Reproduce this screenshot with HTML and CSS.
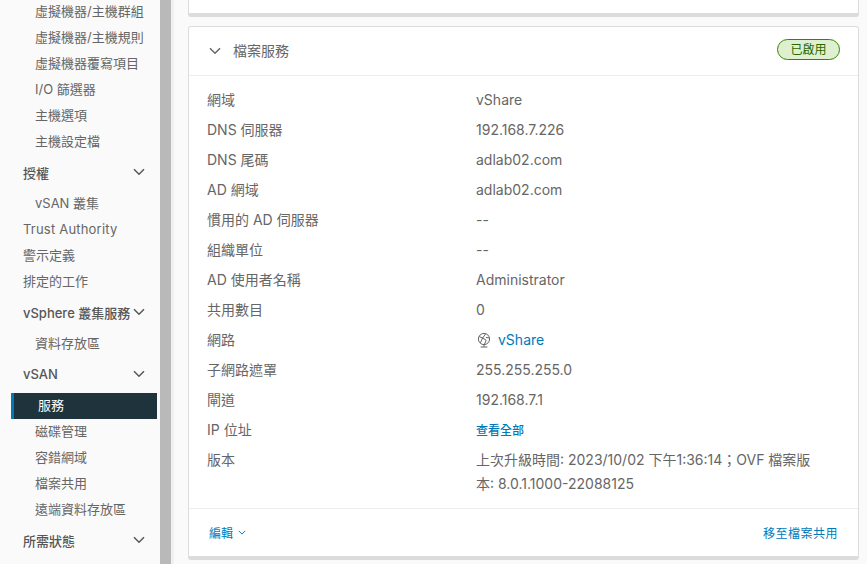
FILE: index.html
```html
<!DOCTYPE html>
<html lang="zh-Hant">
<head>
<meta charset="utf-8">
<title>檔案服務</title>
<link rel="stylesheet" href="styles.css">
</head>
<body>
<div class="app">
  <nav class="sidebar">
    <div class="nav-list">
      <a class="item sub">虛擬機器/主機群組</a>
      <a class="item sub">虛擬機器/主機規則</a>
      <a class="item sub">虛擬機器覆寫項目</a>
      <a class="item sub">I/O 篩選器</a>
      <a class="item sub">主機選項</a>
      <a class="item sub">主機設定檔</a>
      <div class="head"><span>授權</span><svg class="chev" viewBox="0 0 12 8"><path d="M1 1.2 6 6.2 11 1.2"/></svg></div>
      <a class="item sub">vSAN 叢集</a>
      <a class="item top spaced-latin">Trust Authority</a>
      <a class="item top">警示定義</a>
      <a class="item top">排定的工作</a>
      <div class="head"><span>vSphere 叢集服務</span><svg class="chev" viewBox="0 0 12 8"><path d="M1 1.2 6 6.2 11 1.2"/></svg></div>
      <a class="item sub">資料存放區</a>
      <div class="head"><span>vSAN</span><svg class="chev" viewBox="0 0 12 8"><path d="M1 1.2 6 6.2 11 1.2"/></svg></div>
      <a class="item selected">服務</a>
      <a class="item sub">磁碟管理</a>
      <a class="item sub">容錯網域</a>
      <a class="item sub">檔案共用</a>
      <a class="item sub">遠端資料存放區</a>
      <div class="head"><span>所需狀態</span><svg class="chev" viewBox="0 0 12 8"><path d="M1 1.2 6 6.2 11 1.2"/></svg></div>
    </div>
  </nav>
  <div class="splitter"></div>
  <main class="main">
    <section class="card card-prev"></section>
    <section class="card">
      <header class="card-head">
        <svg class="head-chev" viewBox="0 0 12 8"><path d="M1 1.2 6 6.2 11 1.2"/></svg>
        <h2 class="title">檔案服務</h2>
        <span class="badge">已啟用</span>
      </header>
      <dl class="rows">
        <div class="row"><dt>網域</dt><dd>vShare</dd></div>
        <div class="row"><dt>DNS 伺服器</dt><dd>192.168.7.226</dd></div>
        <div class="row"><dt>DNS 尾碼</dt><dd>adlab02.com</dd></div>
        <div class="row"><dt>AD 網域</dt><dd>adlab02.com</dd></div>
        <div class="row"><dt>慣用的 AD 伺服器</dt><dd>--</dd></div>
        <div class="row"><dt>組織單位</dt><dd>--</dd></div>
        <div class="row"><dt>AD 使用者名稱</dt><dd>Administrator</dd></div>
        <div class="row"><dt>共用數目</dt><dd>0</dd></div>
        <div class="row"><dt>網路</dt><dd class="net">
          <svg class="globe" viewBox="0 0 16 16"><circle cx="8" cy="7" r="5.6"/><path d="M3.2 4.6 6.6 6 10.2 8.2M6.6 6 9.6 2M10.2 8.2 8.4 12.5M6.6 6 4.4 10.8M10 5.4 13.2 6M8 12.6V15M4.6 15H11.4"/></svg>
          <a class="link">vShare</a></dd></div>
        <div class="row"><dt>子網路遮罩</dt><dd>255.255.255.0</dd></div>
        <div class="row"><dt>閘道</dt><dd>192.168.7.1</dd></div>
        <div class="row"><dt>IP 位址</dt><dd><a class="link small">查看全部</a></dd></div>
        <div class="row row-tall"><dt>版本</dt><dd>上次升級時間: 2023/10/02 下午1:36:14；OVF 檔案版本: 8.0.1.1000-22088125</dd></div>
      </dl>
      <footer class="card-foot">
        <a class="action">編輯<svg class="mini-chev" viewBox="0 0 10 6"><path d="M1 1 5 5 9 1"/></svg></a>
        <a class="action spaced">移至檔案共用</a>
      </footer>
    </section>
  </main>
</div>
</body>
</html>
```
FILE: styles.css
```css
* { box-sizing: border-box; }
html, body { margin: 0; height: 564px; overflow: hidden; }
body {
  font-family: Inter, "Noto Sans CJK TC", sans-serif;
  font-size: 13px;
  color: #666;
  background: #fafafa;
}
.app { display: flex; height: 564px; overflow: hidden; }

.sidebar { width: 157px; flex: none; background: #fafafa; overflow: hidden; }
.nav-list { margin-top: -1px; display: flex; flex-direction: column; }
.item { display: block; height: 26px; line-height: 25px; white-space: nowrap; color: #666; }
.sub { padding-left: 35px; }
.top { padding-left: 23px; }
.spaced-latin { letter-spacing: .2px; }
.selected {
  margin-left: 11px;
  padding-left: 24px;
  background: #1f333d;
  border-left: 3px solid #0079b8;
  color: #fff;
}
.head {
  height: 36px;
  padding: 0 12px 2px 23px;
  display: flex;
  align-items: center;
  justify-content: space-between;
  font-weight: 500;
  color: #565656;
  white-space: nowrap;
}
.chev { width: 12px; height: 8px; flex: none; fill: none; stroke: #565656; stroke-width: 1.5; }

.splitter { width: 11px; margin-left: 3px; flex: none; background: #b9b9b9; }
.main { flex: 1; min-width: 0; padding: 0 8px 0 14px; border-left: 3px solid #f0f0f0; }

.card {
  background: #fff;
  border: 1px solid #dcdcdc;
  border-bottom-width: 4px;
  border-radius: 3px;
}
.card-prev { height: 19px; margin-top: -2px; margin-bottom: 9px; border-top: 0; border-radius: 0 0 3px 3px; }
.card-head {
  height: 49px;
  padding: 0 18px 0 20px;
  display: flex;
  align-items: center;
  border-bottom: 1px solid #eee;
}
.head-chev { width: 12px; height: 8px; fill: none; stroke: #666; stroke-width: 1.5; margin-right: 12px; }
.title { margin: 0 0 2px; flex: 1; font-size: 14px; font-weight: 400; color: #666; }
.badge {
  height: 21px;
  width: 63px;
  margin-bottom: 3px;
  line-height: 19px;
  text-align: center;
  border: 1px solid #318700;
  border-radius: 11px;
  background: #dff0d0;
  color: #266900;
  font-size: 12px;
}
.rows { margin: 0; padding: 9px 19px 0 18px; }
.row { display: flex; min-height: 30px; line-height: 30px; }
.row dt { width: 269px; flex: none; font-size: 14px; }
.row dd { margin: 0; width: 342px; font-size: 14px; }
.row-tall { line-height: 24px; padding-top: 2px; }
.net { display: flex; align-items: center; }
.globe { width: 16px; height: 16px; margin-right: 6px; fill: none; stroke: #666; stroke-width: 1; }
.link { color: #0079b8; }
.small { font-size: 12px; font-weight: 500; }
.card-foot {
  height: 48px;
  margin-top: 12px;
  padding: 0 20px;
  display: flex;
  align-items: center;
  justify-content: space-between;
  border-top: 1px solid #eee;
}
.action { color: #0079b8; font-size: 12px; display: flex; align-items: center; }
.spaced { letter-spacing: .5px; }
.mini-chev { width: 8px; height: 5px; margin-left: 5px; fill: none; stroke: #0079b8; stroke-width: 1.2; }
```
